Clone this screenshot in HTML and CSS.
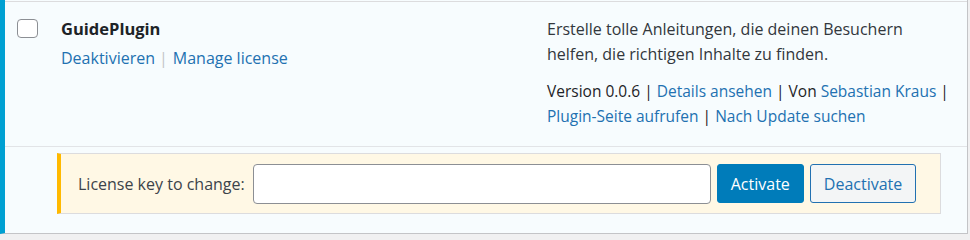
FILE: index.html
```html
<!DOCTYPE html>
<html lang="de">
<head>
<meta charset="utf-8">
<title>Plugins</title>
<link rel="stylesheet" href="styles.css">
</head>
<body>
<div class="plugins">
  <div class="plugin-row">
    <div class="check-col"><span class="checkbox"></span></div>
    <div class="title-col">
      <strong class="name">GuidePlugin</strong>
      <div class="row-actions"><a href="#">Deaktivieren</a><span class="sep">|</span><a href="#">Manage license</a></div>
    </div>
    <div class="desc-col">
      <p class="desc">Erstelle tolle Anleitungen, die deinen Besuchern helfen, die richtigen Inhalte zu finden.</p>
      <div class="meta">Version 0.0.6 | <a href="#">Details ansehen</a> | Von <a href="#">Sebastian Kraus</a> | <a href="#">Plugin-Seite aufrufen</a> | <a href="#">Nach Update suchen</a></div>
    </div>
  </div>
  <div class="update-row">
    <div class="notice">
      <label class="label" for="key">License key to change:</label>
      <input id="key" class="key-input" type="text">
      <button class="btn btn-primary" type="button">Activate</button>
      <button class="btn btn-secondary" type="button">Deactivate</button>
    </div>
  </div>
</div>
</body>
</html>
```
FILE: styles.css
```css
* { box-sizing: border-box; }
html, body { margin: 0; padding: 0; }
body {
  background: #f0f0f1;
  font-family: "Open Sans", "Noto Sans", sans-serif;
  font-size: 16px;
  color: #32373c;
}
a { color: #2271b1; text-decoration: none; }

.plugins {
  width: 968px;
  padding-top: 1px;
  background: #f7fcfe;
  border-left: 5px solid #00a0d2;
  border-right: 1px solid #c3c4c7;
  border-bottom: 1px solid #c3c4c7;
}

.plugin-row {
  display: flex;
  border-top: 1px solid #dcdcde;
  border-bottom: 1px solid #e2e4e7;
  height: 146px;
}
.check-col { width: 56px; padding: 17px 0 0 12px; }
.checkbox {
  display: block;
  width: 21px;
  height: 19px;
  background: #fff;
  border: 1px solid #8c8f94;
  border-radius: 4px;
}
.title-col { width: 486px; padding-top: 15px; }
.name {
  display: block;
  font-size: 16.5px;
  line-height: 24px;
  font-weight: 700;
  color: #1d2327;
}
.row-actions { margin-top: 5px; line-height: 25px; }
.row-actions .sep { color: #c3c4c7; margin: 0 5px 0 4px; }

.desc-col { flex: 1; padding: 15px 16px 0 0; line-height: 25px; }
.desc { margin: 0 0 12px; }
.meta { color: #1d2327; font-size: 15.5px; }

.update-row { padding: 6px 26px 19px 52px; }
.notice {
  display: flex;
  align-items: center;
  height: 61px;
  padding: 0 0 0 17px;
  background: #fff8e5;
  border: 1px solid #dcdcde;
  border-left: 4px solid #ffb900;
}
.notice > * { flex-shrink: 0; }
.label { margin-right: 8px; color: #3c434a; white-space: nowrap; }
.key-input {
  width: 458px;
  height: 40px;
  margin: 0 6px 0 0;
  border: 1px solid #8c8f94;
  border-radius: 4px;
  background: #fff;
  font: inherit;
}
.btn {
  height: 39px;
  padding: 0 13px;
  border-radius: 3px;
  font: inherit;
  font-size: 16px;
  white-space: nowrap;
  cursor: pointer;
}
.btn-primary {
  background: #007cba;
  border: 1px solid #007cba;
  color: #fff;
  margin-right: 6px;
}
.btn-secondary {
  background: #f3f5f6;
  border: 1px solid #2271b1;
  color: #2271b1;
}
```
